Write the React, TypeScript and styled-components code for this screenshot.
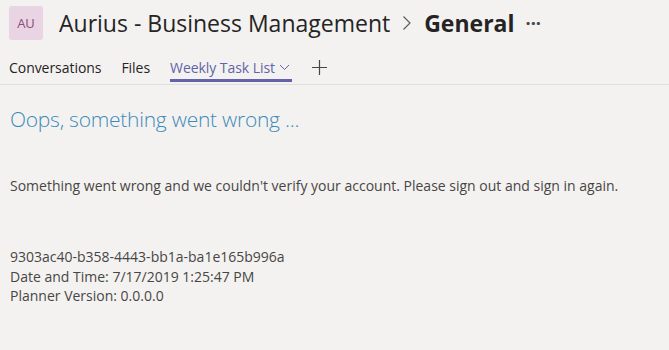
import styled, { createGlobalStyle } from "styled-components";

const GlobalStyle = createGlobalStyle`
  html, body {
    margin: 0;
    padding: 0;
    background: #f3f2f1;
  }
  body {
    font-family: "Open Sans", "Noto Sans", sans-serif;
    color: #252423;
  }
`;

const tabs = ["Conversations", "Files"];

const infoLines = [
  "9303ac40-b358-4443-bb1a-ba1e165b996a",
  "Date and Time: 7/17/2019 1:25:47 PM",
  "Planner Version: 0.0.0.0",
];

export default function App() {
  return (
    <Page>
      <GlobalStyle />
      <Header>
        <Avatar>AU</Avatar>
        <Title>
          <span>Aurius - Business Management</span>
          <Chevron>
            <svg width="10" height="16" viewBox="0 0 10 16">
              <path d="M1.5 1.5 L8 8 L1.5 14.5" fill="none" stroke="#605e5c" strokeWidth="1.2" />
            </svg>
          </Chevron>
          <Channel>General</Channel>
          <More>···</More>
        </Title>
      </Header>
      <TabBar>
        {tabs.map((t) => (
          <Tab key={t}>{t}</Tab>
        ))}
        <Tab active>
          Weekly Task List
          <svg width="11" height="7" viewBox="0 0 11 7">
            <path d="M1 1 L5.5 5.5 L10 1" fill="none" stroke="#6264a7" strokeWidth="1" />
          </svg>
        </Tab>
        <AddTab>
          <svg width="15" height="15" viewBox="0 0 15 15">
            <path d="M7.5 0 V15 M0 7.5 H15" stroke="#484644" strokeWidth="1.2" />
          </svg>
        </AddTab>
      </TabBar>
      <Content>
        <ErrorTitle>Oops, something went wrong ...</ErrorTitle>
        <Message>
          Something went wrong and we couldn't verify your account. Please sign
          out and sign in again.
        </Message>
        <Info>
          {infoLines.map((l) => (
            <div key={l}>{l}</div>
          ))}
        </Info>
      </Content>
    </Page>
  );
}

const Page = styled.div`
  width: 669px;
  height: 350px;
  overflow: hidden;
`;

const Header = styled.header`
  display: flex;
  align-items: center;
  gap: 16px;
  padding: 6px 9px 0;
  height: 34px;
`;

const Avatar = styled.div`
  width: 34px;
  height: 34px;
  border-radius: 3px;
  background: #e9d4e3;
  color: #8b4c7c;
  font-size: 13px;
  display: flex;
  align-items: center;
  justify-content: center;
`;

const Title = styled.h1`
  margin: 0;
  display: flex;
  align-items: center;
  font-size: 23px;
  font-weight: 400;
  color: #252423;
  white-space: nowrap;
`;

const Chevron = styled.span`
  display: flex;
  margin: 0 12px;
`;

const Channel = styled.span`
  font-weight: 700;
`;

const More = styled.span`
  margin-left: 11px;
  font-size: 18px;
  font-weight: 700;
  color: #484644;
`;

const TabBar = styled.nav`
  display: flex;
  align-items: flex-start;
  gap: 20px;
  margin-top: 15px;
  padding: 0 9px;
  height: 29px;
  border-bottom: 1px solid #e1dfdd;
`;

const Tab = styled.div<{ active?: boolean }>`
  display: flex;
  align-items: center;
  gap: 4px;
  font-size: 14px;
  letter-spacing: -0.05px;
  height: 24px;
  padding-right: ${({ active }) => (active ? "2px" : "0")};
  color: ${({ active }) => (active ? "#6264a7" : "#252423")};
  border-bottom: 3px solid ${({ active }) => (active ? "#6264a7" : "transparent")};
`;

const AddTab = styled.div`
  display: flex;
  align-items: center;
  height: 24px;
`;

const Content = styled.main`
  padding: 20px 10px 0;
`;

const ErrorTitle = styled.h2`
  margin: 0;
  font-size: 21px;
  letter-spacing: -0.25px;
  font-weight: 300;
  color: #3d8bb8;
`;

const Message = styled.p`
  margin: 43px 0 0;
  font-size: 14px;
  color: #484644;
`;

const Info = styled.div`
  margin-top: 52px;
  font-size: 14px;
  line-height: 19.5px;
  color: #484644;
`;
